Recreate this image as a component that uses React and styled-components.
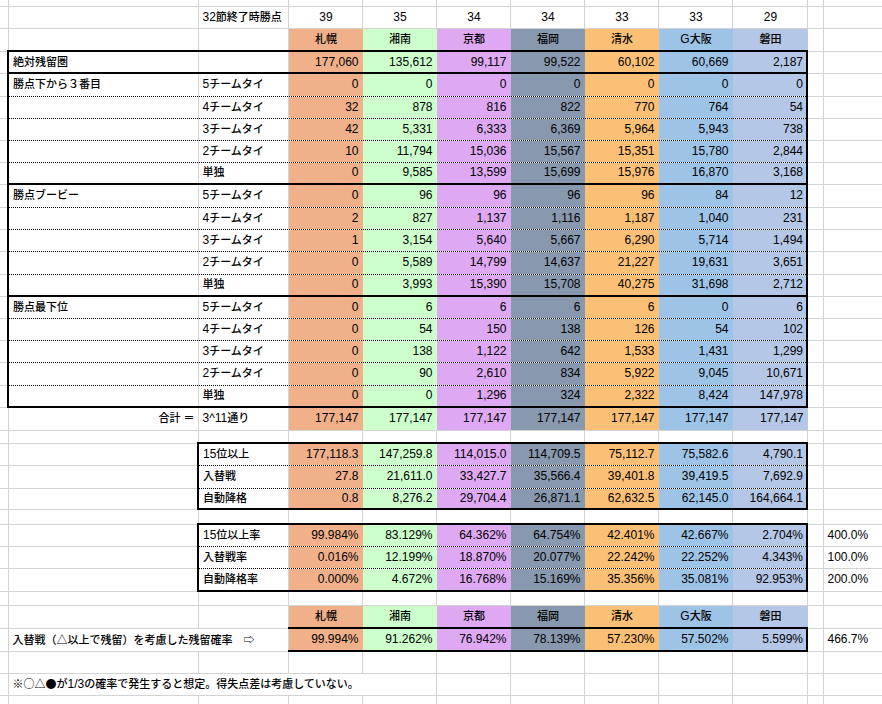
import React from 'react'
import styled, { createGlobalStyle } from 'styled-components'

const GRID = '#d3d3d3'
const THICK = '2px solid #000'
const DOTTED = '1px dotted #000'

const GlobalStyle = createGlobalStyle`
  html, body {
    margin: 0;
    background: #fff;
    overflow: hidden;
  }
  body {
    font-family: "Liberation Sans", "Noto Sans CJK JP", sans-serif;
    color: #000;
  }
`

const TEAMS = [
  { name: '札幌', pts: 39, color: '#f0b08a' },
  { name: '湘南', pts: 35, color: '#ccffcc' },
  { name: '京都', pts: 34, color: '#dea8f3' },
  { name: '福岡', pts: 34, color: '#8898ae' },
  { name: '清水', pts: 33, color: '#fbbf76' },
  { name: 'G大阪', pts: 33, color: '#9dc3e6' },
  { name: '磐田', pts: 29, color: '#b4c7e7' },
]

const COLS = [8, 190, 90, 74, 74, 74, 74, 74, 74, 75, 16, 74]

const SUB = ['5チームタイ', '4チームタイ', '3チームタイ', '2チームタイ', '単独']

const BLOCKS = [
  {
    title: '勝点下から３番目',
    rows: [
      ['0', '0', '0', '0', '0', '0', '0'],
      ['32', '878', '816', '822', '770', '764', '54'],
      ['42', '5,331', '6,333', '6,369', '5,964', '5,943', '738'],
      ['10', '11,794', '15,036', '15,567', '15,351', '15,780', '2,844'],
      ['0', '9,585', '13,599', '15,699', '15,976', '16,870', '3,168'],
    ],
  },
  {
    title: '勝点ブービー',
    rows: [
      ['0', '96', '96', '96', '96', '84', '12'],
      ['2', '827', '1,137', '1,116', '1,187', '1,040', '231'],
      ['1', '3,154', '5,640', '5,667', '6,290', '5,714', '1,494'],
      ['0', '5,589', '14,799', '14,637', '21,227', '19,631', '3,651'],
      ['0', '3,993', '15,390', '15,708', '40,275', '31,698', '2,712'],
    ],
  },
  {
    title: '勝点最下位',
    rows: [
      ['0', '6', '6', '6', '6', '0', '6'],
      ['0', '54', '150', '138', '126', '54', '102'],
      ['0', '138', '1,122', '642', '1,533', '1,431', '1,299'],
      ['0', '90', '2,610', '834', '5,922', '9,045', '10,671'],
      ['0', '0', '1,296', '324', '2,322', '8,424', '147,978'],
    ],
  },
]

// block heights keep the grid on the reference's uneven pixel rows
const BLOCK_HEIGHTS = [
  [23, 22, 22, 22, 22],
  [23, 22, 22, 23, 22],
  [22, 22, 22, 23, 22],
]

const EXPECTED = [
  { label: '15位以上', h: 22, values: ['177,118.3', '147,259.8', '114,015.0', '114,709.5', '75,112.7', '75,582.6', '4,790.1'] },
  { label: '入替戦', h: 23, values: ['27.8', '21,611.0', '33,427.7', '35,566.4', '39,401.8', '39,419.5', '7,692.9'] },
  { label: '自動降格', h: 21, values: ['0.8', '8,276.2', '29,704.4', '26,871.1', '62,632.5', '62,145.0', '164,664.1'] },
]

const RATES = [
  { label: '15位以上率', h: 22, total: '400.0%', values: ['99.984%', '83.129%', '64.362%', '64.754%', '42.401%', '42.667%', '2.704%'] },
  { label: '入替戦率', h: 22, total: '100.0%', values: ['0.016%', '12.199%', '18.870%', '20.077%', '22.242%', '22.252%', '4.343%'] },
  { label: '自動降格率', h: 23, total: '200.0%', values: ['0.000%', '4.672%', '16.768%', '15.169%', '35.356%', '35.081%', '92.953%'] },
]

const SURVIVAL = ['99.994%', '91.262%', '76.942%', '78.139%', '57.230%', '57.502%', '5.599%']

const Sheet = styled.table`
  border-collapse: collapse;
  table-layout: fixed;
  width: ${COLS.reduce((a, b) => a + b, 0)}px;
`

const Col = styled.col`
  width: ${p => p.$w}px;
`

const Row = styled.tr`
  height: ${p => p.$h}px;
`

const Cell = styled.td`
  padding: ${p => (p.$align === 'right' ? '0 3px 0 2px' : '0 2px 0 4px')};
  font-size: ${p => (p.$label ? 11 : 12)}px;
  font-weight: ${p => (p.$label ? 500 : 400)};
  line-height: 13px;
  text-align: ${p => p.$align || 'left'};
  vertical-align: middle;
  white-space: nowrap;
  overflow: hidden;
  background: ${p => p.$fill || '#fff'};
  border-top: ${p => (p.$top ? THICK : 'none')};
  border-left: ${p => (p.$left ? THICK : 'none')};
  border-right: ${p => (p.$right ? THICK : `1px solid ${p.$fill || GRID}`)};
  border-bottom: ${p =>
    p.$bottom === 'thick' ? THICK : p.$bottom === 'dotted' ? DOTTED : `1px solid ${GRID}`};
`

// Latin runs inside Japanese labels sit at the number size
const Latin = styled.span`
  font-size: 12px;
  font-weight: 400;
`

// full-width marks (○△●) come from the CJK face, not the Latin one
const Marks = styled.span`
  font-family: "Noto Sans CJK JP", sans-serif;
`

function Mixed({ text }) {
  return text
    .split(/([0-9A-Za-z^/.]+)/)
    .filter(Boolean)
    .map((part, i) => (/^[0-9A-Za-z^/.]+$/.test(part) ? <Latin key={i}>{part}</Latin> : part))
}

function TeamCells({ values, edge = {}, boxed = false, align = 'right', label = false }) {
  return TEAMS.map((team, i) => (
    <Cell
      key={team.name}
      $fill={team.color}
      $align={align}
      $label={label}
      $right={boxed && i === TEAMS.length - 1}
      {...edge}
    >
      {label ? <Mixed text={values[i]} /> : values[i]}
    </Cell>
  ))
}

function Blank({ h }) {
  return (
    <Row $h={h}>
      {COLS.map((_, i) => (
        <Cell key={i} />
      ))}
    </Row>
  )
}

function Tail({ text }) {
  return (
    <>
      <Cell />
      <Cell>{text}</Cell>
    </>
  )
}

const edgeOf = (i, n) => ({
  $top: i === 0,
  $bottom: i === n - 1 ? 'thick' : 'dotted',
})

function App() {
  return (
    <>
      <GlobalStyle />
      <Sheet>
        <colgroup>
          {COLS.map((w, i) => (
            <Col key={i} $w={w} />
          ))}
        </colgroup>
        <tbody>
          <Blank h={6} />

          <Row $h={22}>
            <Cell />
            <Cell />
            <Cell $label><Mixed text="32節終了時勝点" /></Cell>
            {TEAMS.map(t => (
              <Cell key={t.name} $align="center">{t.pts}</Cell>
            ))}
            <Tail />
          </Row>

          <Row $h={23}>
            <Cell />
            <Cell />
            <Cell />
            <TeamCells values={TEAMS.map(t => t.name)} align="center" label />
            <Tail />
          </Row>

          <Row $h={22}>
            <Cell />
            <Cell $label $left $top $bottom="thick">絶対残留圏</Cell>
            <Cell $top $bottom="thick" />
            <TeamCells
              values={['177,060', '135,612', '99,117', '99,522', '60,102', '60,669', '2,187']}
              edge={{ $top: true, $bottom: 'thick' }}
              boxed
            />
            <Tail />
          </Row>

          {BLOCKS.map((block, b) =>
            block.rows.map((values, i) => {
              const edge = edgeOf(i, block.rows.length)
              return (
                <Row key={`${b}-${i}`} $h={BLOCK_HEIGHTS[b][i]}>
                  <Cell />
                  <Cell $label $left {...edge}>{i === 0 ? block.title : ''}</Cell>
                  <Cell $label {...edge}><Mixed text={SUB[i]} /></Cell>
                  <TeamCells values={values} edge={edge} boxed />
                  <Tail />
                </Row>
              )
            })
          )}

          <Row $h={23}>
            <Cell />
            <Cell $label $align="right">合計 ＝</Cell>
            <Cell $label><Mixed text="3^11通り" /></Cell>
            <TeamCells values={TEAMS.map(() => '177,147')} />
            <Tail />
          </Row>

          <Blank h={13} />

          {EXPECTED.map((r, i) => {
            const edge = edgeOf(i, EXPECTED.length)
            return (
              <Row key={r.label} $h={r.h}>
                <Cell />
                <Cell />
                <Cell $label $left {...edge}><Mixed text={r.label} /></Cell>
                <TeamCells values={r.values} edge={edge} boxed />
                <Tail />
              </Row>
            )
          })}

          <Blank h={15} />

          {RATES.map((r, i) => {
            const edge = edgeOf(i, RATES.length)
            return (
              <Row key={r.label} $h={r.h}>
                <Cell />
                <Cell />
                <Cell $label $left {...edge}><Mixed text={r.label} /></Cell>
                <TeamCells values={r.values} edge={edge} boxed />
                <Tail text={r.total} />
              </Row>
            )
          })}

          <Blank h={14} />

          <Row $h={23}>
            <Cell />
            <Cell />
            <Cell />
            <TeamCells values={TEAMS.map(t => t.name)} align="center" label />
            <Tail />
          </Row>

          <Row $h={23}>
            <Cell />
            <Cell $label colSpan={2}>
              入替戦（<Marks>△</Marks>以上で残留）を考慮した残留確率　<Marks>⇨</Marks>
            </Cell>
            <TeamCells
              values={SURVIVAL}
              edge={{ $top: true, $bottom: 'thick' }}
              boxed
            />
            <Tail text="466.7%" />
          </Row>

          <Blank h={22} />

          <Row $h={22}>
            <Cell />
            <Cell $label colSpan={4}>
              <Marks>※○△●</Marks>が<Latin>1/3</Latin>の確率で発生すると想定。得失点差は考慮していない。
            </Cell>
            <Cell />
            <Cell />
            <Cell />
            <Cell />
            <Cell />
            <Tail />
          </Row>

          <Blank h={22} />
        </tbody>
      </Sheet>
    </>
  )
}

export default App
